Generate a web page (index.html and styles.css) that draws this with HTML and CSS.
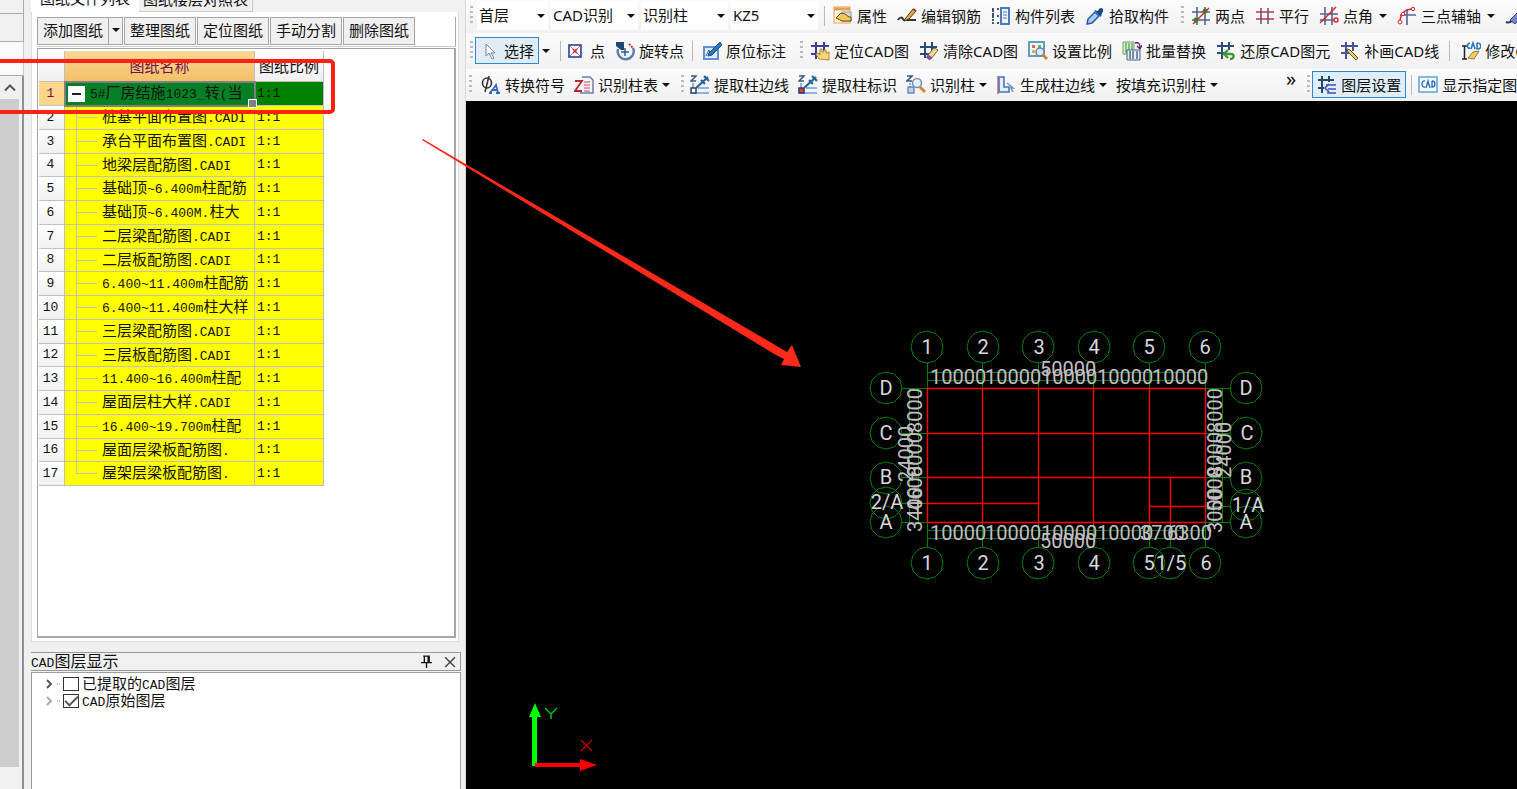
FILE: index.html
```html
<!DOCTYPE html>
<html lang="zh-CN">
<head>
<meta charset="utf-8">
<title>CAD图层显示</title>
<link rel="stylesheet" href="styles.css">
</head>
<body>
<svg class="defs" aria-hidden="true">
  <symbol id="i-prop" viewBox="0 0 20 20"><rect x="1" y="1" width="16" height="16" fill="#fff6e4" stroke="#e9a04c"/><path d="M1 3h16" stroke="#e9a04c" stroke-width="3"/><rect x="9" y="6" width="9" height="9" fill="#d8d8d8" stroke="#999"/><path d="M3 12l5-5 4 1 4 3 2 0v4H9z" fill="#f3c955" stroke="#5c4a1c"/></symbol>
  <symbol id="i-rebar" viewBox="0 0 20 20"><path d="M1 14c2-3 4-3 5-1s2 1 3 1h10" fill="none" stroke="#333" stroke-width="2"/><path d="M8 13l8-10 3 2-7 8-5 2z" fill="#d8b23c" stroke="#4c3a20"/><path d="M16 3l3 2" stroke="#b03030" stroke-width="2"/></symbol>
  <symbol id="i-list" viewBox="0 0 20 20"><path d="M1 3h3M1 10h3M1 17h3M6 3h2M6 10h2M6 17h2M2 4v14" stroke="#45526a" stroke-width="2" stroke-dasharray="2 1"/><rect x="10" y="2" width="8" height="16" fill="#eaf3ff" stroke="#4d79bd" stroke-width="2"/><path d="M12 6h4M12 9h4M12 12h4" stroke="#4d79bd"/></symbol>
  <symbol id="i-pick" viewBox="0 0 20 20"><path d="M2 18l1-5 7-7 4 4-7 7z" fill="#a9cdf2" stroke="#2b5ca8" stroke-width="1.5"/><path d="M9 4l7 7 1-4c3-3 0-7-3-4l-1 2z" fill="#174a8c"/></symbol>
  <symbol id="i-two" viewBox="0 0 20 20"><path d="M6 1v18M14 1v18M1 6h18M1 14h18" stroke="#53629c" stroke-width="1.6"/><path d="M2 18L18 2" stroke="#d22" stroke-width="1.5"/><circle cx="14" cy="5" r="2.5" fill="#4a7a1e"/><circle cx="5" cy="14" r="2.5" fill="#4a7a1e"/></symbol>
  <symbol id="i-par" viewBox="0 0 20 20"><path d="M6 2v16M13 2v16" stroke="#53629c" stroke-width="1.6"/><path d="M1 6h18M1 13h18" stroke="#c8343c" stroke-width="1.6"/></symbol>
  <symbol id="i-ang" viewBox="0 0 20 20"><path d="M6 1v18M13 1v18M1 8h18M1 14h14" stroke="#53629c" stroke-width="1.6"/><path d="M1 17L17 1" stroke="#d22" stroke-width="1.5"/><circle cx="17" cy="14" r="2" fill="#fff" stroke="#d22" stroke-width="1.5"/></symbol>
  <symbol id="i-arc" viewBox="0 0 20 20"><path d="M10 3v16M3 9h16" stroke="#53629c" stroke-width="1.6"/><path d="M3 16C3 8 8 3 16 3" fill="none" stroke="#d22" stroke-width="1.5"/><circle cx="3" cy="16" r="2" fill="#fff" stroke="#d22"/><circle cx="6" cy="8" r="1.7" fill="#fff" stroke="#d22"/><circle cx="16" cy="3" r="1.7" fill="#fff" stroke="#d22"/></symbol>
  <symbol id="i-erase" viewBox="0 0 20 20"><path d="M1 16c4 2 6-1 8-3" stroke="#345" fill="none" stroke-width="2"/><path d="M5 14l9-9 5 4-9 9z" fill="#7089c8" stroke="#49377b"/></symbol>
  <symbol id="i-cursor" viewBox="0 0 20 20"><path d="M6 3v12l3-3 3 6 2-1-3-5h4z" fill="#fff" stroke="#7185a0"/></symbol>
  <symbol id="i-point" viewBox="0 0 20 20"><rect x="3" y="4" width="12" height="12" fill="#fff" stroke="#31408c" stroke-width="1.6"/><path d="M4 5l10 10M14 5L4 15" stroke="#7f86c2"/><path d="M7 8l4 4M11 8l-4 4" stroke="#d22" stroke-width="1.6"/></symbol>
  <symbol id="i-rot" viewBox="0 0 20 20"><path d="M3 8a8 8 0 1 0 15-1" fill="none" stroke="#5a7fa8" stroke-width="2.4"/><path d="M1 1h8v8H6L1 5z" fill="#1e4672"/><path d="M10 7v8M6 11h8" stroke="#345a86" stroke-width="1.5"/><path d="M14 3l4 4" stroke="#c33" stroke-width="2" stroke-dasharray="2 1"/></symbol>
  <symbol id="i-note" viewBox="0 0 20 20"><rect x="2" y="6" width="14" height="12" fill="#dcebfb" stroke="#6390cc" stroke-width="2"/><path d="M4 15l3-6 2 5 4-4" fill="none" stroke="#305c9c"/><path d="M7 12L18 1l2 3L10 14l-4 1z" fill="#2f74be" stroke="#1e4d88"/></symbol>
  <symbol id="i-loc" viewBox="0 0 20 20"><path d="M6 1v17M14 1v9M1 5h18M1 13h9" stroke="#3a3c9c" stroke-width="2"/><path d="M9 18l-3-5 2-1 2 2V8h2v3h2V9h2v3h2v-1h1v8z" fill="#f3d77a" stroke="#b58c2c"/></symbol>
  <symbol id="i-clear" viewBox="0 0 20 20"><path d="M6 1v16M13 1v10M1 6h17M1 13h10" stroke="#294c78" stroke-width="2"/><path d="M8 15l7-8 4 2-7 9z" fill="#f0d88c" stroke="#77643c"/><path d="M8 15l4 3" stroke="#8b4ba2" stroke-width="4"/></symbol>
  <symbol id="i-scale" viewBox="0 0 20 20"><rect x="1" y="1" width="15" height="14" fill="#eef8fb" stroke="#5ba3bd" stroke-width="2"/><path d="M4 4h3v3H4z" fill="#e26c45"/><path d="M10 4h3v3h-3z" fill="#6fb451"/><path d="M4 9h3v3H4z" fill="#e8b43a"/><circle cx="12" cy="11" r="4" fill="#d9ecfb" stroke="#71819a" stroke-width="1.5"/><path d="M15 14l4 4" stroke="#c98332" stroke-width="3"/></symbol>
  <symbol id="i-batch" viewBox="0 0 20 20"><path d="M1 1h11v12H1z" fill="#d6efd3" stroke="#69a860"/><path d="M4 2v10M7 2v10M10 2v10" stroke="#69a860" stroke-width="1.4"/><path d="M5 9h13v10H5z" fill="#e6effb" stroke="#45607e"/><path d="M8 10v8M11 10v8M15 10v8" stroke="#45607e" stroke-width="1.4"/><path d="M13 2c4-1 5 1 5 5M15 5l3 3 2-4" fill="none" stroke="#526" stroke-width="1.3"/></symbol>
  <symbol id="i-restore" viewBox="0 0 20 20"><path d="M6 1v17M13 1v8M1 5h17M1 12h8" stroke="#294c78" stroke-width="2"/><path d="M9 13h6c4 0 3 5-1 5M12 9l-4 4 4 4" fill="none" stroke="#3c9a35" stroke-width="2.4"/></symbol>
  <symbol id="i-draw" viewBox="0 0 20 20"><path d="M6 1v17M13 1v9M1 5h17M1 12h8" stroke="#4654a0" stroke-width="2"/><path d="M7 8l3 1 8 8-2 2-8-8z" fill="#ecc96a" stroke="#6c5425"/></symbol>
  <symbol id="i-modify" viewBox="0 0 20 20"><path d="M1 5h5M1 18h5M3.500 5v13" stroke="#222" stroke-width="1.5"/><path d="M9 2c-4 1-3 6 0 5M10 8l2-6 2 6M16 2v6c5 0 5-6 0-6" fill="none" stroke="#2c78ba" stroke-width="1.6"/><path d="M7 17l5-6 6-1-5 8z" fill="#f0cb70" stroke="#9b782b"/></symbol>
  <symbol id="i-sym" viewBox="0 0 20 20"><ellipse cx="6" cy="8" rx="4.500" ry="5" fill="none" stroke="#333" stroke-width="1.6"/><path d="M8 1L4 17" stroke="#333" stroke-width="1.6"/><path d="M9 18l6-8 2 8M11 15h6M8 18h3M15 18h4" fill="none" stroke="#356bb5" stroke-width="1.8"/></symbol>
  <symbol id="i-ztab" viewBox="0 0 20 20"><path d="M8 2h8l3 3v13H6" fill="#f1f5ff" stroke="#6e7fa8" stroke-width="1.5"/><path d="M10 7h6M10 10h6M10 13h6M10 16h6" stroke="#c84545"/><path d="M1 6h7l-7 10h7" fill="none" stroke="#b82733" stroke-width="1.8"/></symbol>
  <symbol id="i-edge" viewBox="0 0 20 20"><path d="M1 1h5L1 6h5" fill="none" stroke="#38558a" stroke-width="1.5"/><path d="M3 8v10h16M8 13h11" fill="none" stroke="#8fb2e2" stroke-width="2"/><rect x="1" y="13" width="5" height="5" fill="#fff" stroke="#2c3e68" stroke-width="1.5"/><path d="M6 13L18 2M14 1l5 5M11 5l4 4" stroke="#28639a" stroke-width="2.2"/></symbol>
  <symbol id="i-mark" viewBox="0 0 20 20"><path d="M1 1h5L1 6h5" fill="none" stroke="#38558a" stroke-width="1.5"/><path d="M3 8v10h16M8 13h11" fill="none" stroke="#8fb2e2" stroke-width="2"/><rect x="1" y="13" width="5" height="5" fill="#e04040" stroke="#2c3e68" stroke-width="1.5"/><path d="M6 13L18 2M14 1l5 5M11 5l4 4" stroke="#28639a" stroke-width="2.2"/></symbol>
  <symbol id="i-ident" viewBox="0 0 20 20"><path d="M1 1h5L1 6h5" fill="none" stroke="#38558a" stroke-width="1.6"/><path d="M4 8v6" stroke="#38558a" stroke-dasharray="2 1"/><rect x="2" y="12" width="6" height="6" fill="#bdd5f2" stroke="#3b5f96"/><circle cx="11" cy="8" r="4.500" fill="#e3effb" stroke="#8191ab" stroke-width="1.6"/><path d="M14 12l5 5" stroke="#d28a3a" stroke-width="3"/></symbol>
  <symbol id="i-gen" viewBox="0 0 20 20"><path d="M2 1v18" stroke="#b22" /><path d="M3 2h5v10h5v5H3z" fill="#e3eefb" stroke="#4c74b5" stroke-width="1.6"/><path d="M11 8l6 5-2 0 2 4" fill="none" stroke="#7d93b0" stroke-width="1.6"/></symbol>
  <symbol id="i-layer" viewBox="0 0 20 20"><path d="M5 1v17M12 1v6M1 5h16M1 13h6" stroke="#214a6c" stroke-width="2"/><path d="M9 10h10M11 14h8M10 18h9M12 9l-4 4 4 4" fill="none" stroke="#4153b0" stroke-width="1.6"/></symbol>
  <symbol id="i-cad" viewBox="0 0 20 20"><rect x="1" y="2" width="18" height="15" fill="#f4faff" stroke="#62a8dc" stroke-width="1.6"/><path d="M7 6c-4-1-4 7 0 6M8 13l2-7 2 7M14 6v6c4 0 4-6 0-6" fill="none" stroke="#2c6fae" stroke-width="1.4"/></symbol>
</svg>

<aside class="rail">
  <div class="rail-box rail-first"></div>
  <div class="rail-box"></div>
  <div class="rail-gap"></div>
  <div class="rail-scroll">
    <svg class="up" viewBox="0 0 20 22"><path d="M5 14l5-5 5 5" fill="none" stroke="#555" stroke-width="2"/></svg>
    <div class="thumb"></div>
  </div>
</aside>

<section class="side">
  <nav class="tabs">
    <button class="tab on">图纸文件列表</button>
    <button class="tab">图纸楼层对照表</button>
  </nav>
  <div class="page">
    <div class="actions">
      <button class="act">添加图纸</button><button class="act drop" aria-label="更多"><span class="caret"></span></button>
      <button class="act">整理图纸</button>
      <button class="act">定位图纸</button>
      <button class="act">手动分割</button>
      <button class="act">删除图纸</button>
    </div>
    <div class="sheet">
      <table class="grid">
        <thead><tr><th class="no"></th><th class="name">图纸名称</th><th class="ratio">图纸比例</th></tr></thead>
        <tbody>
          <tr class="sel"><td class="no">1</td><td class="name"><button class="fold" aria-label="折叠"></button><span class="l">5#</span>厂房结施<span class="l">1023_</span>转<span class="l">(</span>当</td><td>1:1</td></tr>
          <tr><td class="no">2</td><td class="name">桩基平面布置图<span class="l">.CADI</span></td><td>1:1</td></tr>
          <tr><td class="no">3</td><td class="name">承台平面布置图<span class="l">.CADI</span></td><td>1:1</td></tr>
          <tr><td class="no">4</td><td class="name">地梁层配筋图<span class="l">.CADI</span></td><td>1:1</td></tr>
          <tr><td class="no">5</td><td class="name">基础顶<span class="l">~6.400m</span>柱配筋</td><td>1:1</td></tr>
          <tr><td class="no">6</td><td class="name">基础顶<span class="l">~6.400M.</span>柱大</td><td>1:1</td></tr>
          <tr><td class="no">7</td><td class="name">二层梁配筋图<span class="l">.CADI</span></td><td>1:1</td></tr>
          <tr><td class="no">8</td><td class="name">二层板配筋图<span class="l">.CADI</span></td><td>1:1</td></tr>
          <tr><td class="no">9</td><td class="name"><span class="l">6.400~11.400m</span>柱配筋</td><td>1:1</td></tr>
          <tr><td class="no">10</td><td class="name"><span class="l">6.400~11.400m</span>柱大样</td><td>1:1</td></tr>
          <tr><td class="no">11</td><td class="name">三层梁配筋图<span class="l">.CADI</span></td><td>1:1</td></tr>
          <tr><td class="no">12</td><td class="name">三层板配筋图<span class="l">.CADI</span></td><td>1:1</td></tr>
          <tr><td class="no">13</td><td class="name"><span class="l">11.400~16.400m</span>柱配</td><td>1:1</td></tr>
          <tr><td class="no">14</td><td class="name">屋面层柱大样<span class="l">.CADI</span></td><td>1:1</td></tr>
          <tr><td class="no">15</td><td class="name"><span class="l">16.400~19.700m</span>柱配</td><td>1:1</td></tr>
          <tr><td class="no">16</td><td class="name">屋面层梁板配筋图<span class="l">.</span></td><td>1:1</td></tr>
          <tr><td class="no">17</td><td class="name">屋架层梁板配筋图<span class="l">.</span></td><td>1:1</td></tr>
        </tbody>
      </table>
    </div>
  </div>
  <header class="dock-title">
    <h2><span class="l">CAD</span>图层显示</h2>
    <button class="mini" aria-label="固定"><svg viewBox="0 0 12 12"><path d="M3 1h6M4 1v6M7.500 1v6M8.500 1v6M1 7h10M6 7v5" fill="none" stroke="#111" stroke-width="1.2"/></svg></button>
    <button class="mini" aria-label="关闭"><svg viewBox="0 0 12 12"><path d="M2 2l9 9M11 2l-9 9" stroke="#444" stroke-width="1.3"/></svg></button>
  </header>
  <div class="dock-body">
    <div class="node"><svg class="chev" viewBox="0 0 16 12"><path d="M2 2l4 4-4 4" fill="none" stroke="#555" stroke-width="2"/><path d="M12 6h4" stroke="#888" stroke-dasharray="1 1"/></svg><input type="checkbox" id="c1"><label for="c1">已提取的<span class="l">CAD</span>图层</label></div>
    <div class="node"><svg class="chev" viewBox="0 0 16 12"><path d="M2 2l4 4-4 4" fill="none" stroke="#aaa" stroke-width="2"/><path d="M12 6h4" stroke="#888" stroke-dasharray="1 1"/></svg><input type="checkbox" id="c2" checked><label for="c2"><span class="l">CAD</span>原始图层</label></div>
  </div>
</section>

<main class="main">
  <div class="bars">
    <div class="bar top">
      <span class="grip"></span>
      <span class="combo short"><select aria-label="楼层"><option>首层</option></select></span>
      <span class="combo"><select aria-label="模块"><option>CAD识别</option></select></span>
      <span class="combo"><select aria-label="类型"><option>识别柱</option></select></span>
      <span class="combo"><select aria-label="构件"><option>KZ5</option></select></span>
      <span class="sep"></span>
      <button class="tool"><svg><use href="#i-prop"/></svg>属性</button>
      <button class="tool"><svg><use href="#i-rebar"/></svg>编辑钢筋</button>
      <button class="tool"><svg><use href="#i-list"/></svg>构件列表</button>
      <button class="tool"><svg><use href="#i-pick"/></svg>拾取构件</button>
      <span class="grip next"></span>
      <button class="tool"><svg><use href="#i-two"/></svg>两点</button>
      <button class="tool"><svg><use href="#i-par"/></svg>平行</button>
      <button class="tool"><svg><use href="#i-ang"/></svg>点角<span class="caret"></span></button>
      <button class="tool"><svg><use href="#i-arc"/></svg>三点辅轴<span class="caret"></span></button>
      <button class="tool" aria-label="删除辅轴"><svg><use href="#i-erase"/></svg></button>
    </div>
    <div class="bar mid">
      <span class="grip"></span>
      <button class="tool active"><svg><use href="#i-cursor"/></svg>选择</button>
      <button class="tool more" aria-label="选择方式"><span class="caret"></span></button>
      <span class="sep"></span>
      <button class="tool point"><svg><use href="#i-point"/></svg>点</button>
      <button class="tool"><svg><use href="#i-rot"/></svg>旋转点</button>
      <span class="sep"></span>
      <button class="tool"><svg><use href="#i-note"/></svg>原位标注</button>
      <span class="grip next wide"></span>
      <button class="tool"><svg><use href="#i-loc"/></svg>定位CAD图</button>
      <button class="tool"><svg><use href="#i-clear"/></svg>清除CAD图</button>
      <button class="tool"><svg><use href="#i-scale"/></svg>设置比例</button>
      <button class="tool"><svg><use href="#i-batch"/></svg>批量替换</button>
      <button class="tool"><svg><use href="#i-restore"/></svg>还原CAD图元</button>
      <button class="tool"><svg><use href="#i-draw"/></svg>补画CAD线</button>
      <span class="sep end"></span>
      <button class="tool"><svg><use href="#i-modify"/></svg>修改CAD</button>
    </div>
    <div class="bar low">
      <span class="grip"></span>
      <button class="tool"><svg><use href="#i-sym"/></svg>转换符号</button>
      <button class="tool"><svg><use href="#i-ztab"/></svg>识别柱表<span class="caret"></span></button>
      <span class="grip next"></span>
      <button class="tool"><svg><use href="#i-edge"/></svg>提取柱边线</button>
      <button class="tool"><svg><use href="#i-mark"/></svg>提取柱标识</button>
      <button class="tool"><svg><use href="#i-ident"/></svg>识别柱<span class="caret"></span></button>
      <button class="tool"><svg><use href="#i-gen"/></svg>生成柱边线<span class="caret"></span></button>
      <button class="tool">按填充识别柱<span class="caret"></span></button>
      <button class="tool overflow">»</button>
      <span class="grip next"></span>
      <button class="tool active layer"><svg><use href="#i-layer"/></svg>图层设置</button>
      <span class="sep"></span>
      <button class="tool"><svg><use href="#i-cad"/></svg>显示指定图层</button>
    </div>
  </div>
  <div class="canvas">
    <svg class="drawing" viewBox="466 101 1051 688">
      <defs><polygon id="bub" points="0,-16 8,-14 14,-8 16,0 14,8 8,14 0,16 -8,14 -14,8 -16,0 -14,-8 -8,-14"/></defs>
      <g class="green">
        <path d="M927.500 363v25M982.500 363v25M1038.500 363v25M1093.500 363v25M1149.500 363v25M1205.500 363v25M927.500 522v25M982.500 522v25M1038.500 522v25M1093.500 522v25M1149.500 522v25M1170.500 522v25M1205.500 522v25"/>
        <path d="M902 388.500h25M902 433.500h25M902 477.500h25M902 503.500h25M902 522.500h25M1205 388.500h25M1205 433.500h25M1205 477.500h25M1205 506.500h25M1205 522.500h25"/>
        <path d="M927 372.500h278M927 380.500h278M927 530.500h278M927 538.500h278M909.500 388v134M918.500 388v134M1213.500 388v134M1222.500 388v134"/>
        <use href="#bub" x="927" y="347"/><use href="#bub" x="983" y="347"/><use href="#bub" x="1038" y="347"/><use href="#bub" x="1094" y="347"/><use href="#bub" x="1149" y="347"/><use href="#bub" x="1205" y="347"/>
        <use href="#bub" x="927" y="563"/><use href="#bub" x="983" y="563"/><use href="#bub" x="1038" y="563"/><use href="#bub" x="1094" y="563"/><use href="#bub" x="1149" y="563"/><use href="#bub" x="1170" y="563"/><use href="#bub" x="1205" y="563"/>
        <use href="#bub" x="886" y="388"/><use href="#bub" x="886" y="433"/><use href="#bub" x="886" y="478"/><use href="#bub" x="886" y="503"/><use href="#bub" x="886" y="522"/>
        <use href="#bub" x="1246" y="388"/><use href="#bub" x="1246" y="433"/><use href="#bub" x="1246" y="478"/><use href="#bub" x="1246" y="505"/><use href="#bub" x="1246" y="522"/>
      </g>
      <path class="red" d="M927.500 388v134M982.500 388v134M1038.500 388v134M1093.500 388v134M1149.500 388v134M1205.500 388v134M1170.500 477v45M927 388.500h278M927 433.500h278M927 477.500h278M927 522.500h278M927 503.500h111M1149 506.500h56"/>
      <g class="dim">
        <text x="930" y="384">10000</text><text x="985" y="384">10000</text><text x="1041" y="384">10000</text><text x="1097" y="384">10000</text><text x="1152" y="384">10000</text><text x="1040" y="376">50000</text>
        <text x="930" y="540">10000</text><text x="985" y="540">10000</text><text x="1041" y="540">10000</text><text x="1097" y="540">10000</text><text x="1140" y="540">3700</text><text x="1167" y="540">6300</text><text x="1040" y="548">50000</text>
        <text transform="translate(922 433) rotate(-90)">8000</text><text transform="translate(922 477) rotate(-90)">8000</text><text transform="translate(922 511) rotate(-90)">4600</text><text transform="translate(922 532) rotate(-90)">3400</text><text transform="translate(913 482) rotate(-90)">24000</text>
        <text transform="translate(1222 433) rotate(-90)">8000</text><text transform="translate(1222 477) rotate(-90)">8000</text><text transform="translate(1222 512) rotate(-90)">5000</text><text transform="translate(1222 533) rotate(-90)">3000</text><text transform="translate(1231 478) rotate(-90)">24000</text>
      </g>
      <g class="axis">
        <text x="927" y="354">1</text><text x="983" y="354">2</text><text x="1039" y="354">3</text><text x="1094" y="354">4</text><text x="1149" y="354">5</text><text x="1205" y="354">6</text>
        <text x="927" y="570">1</text><text x="983" y="570">2</text><text x="1039" y="570">3</text><text x="1094" y="570">4</text><text x="1149" y="570">5</text><text x="1171" y="570">1/5</text><text x="1206" y="570">6</text>
        <text x="886" y="395">D</text><text x="886" y="440">C</text><text x="886" y="484">B</text><text x="887" y="509">2/A</text><text x="886" y="529">A</text>
        <text x="1246" y="395">D</text><text x="1247" y="440">C</text><text x="1246" y="484">B</text><text x="1248" y="512">1/A</text><text x="1246" y="529">A</text>
      </g>
      <path d="M532 766v-49h-3l6-14 6 14h-4v49z" fill="#0f0"/>
      <path d="M535 763h45v-4l17 6-17 6v-4h-45z" fill="#f00"/>
      <path d="M545 708l6 6 6-6M551 714v5" fill="none" stroke="#00c800" stroke-width="1.4"/>
      <path d="M581 740l11 11M592 740l-11 11" fill="none" stroke="#c00000" stroke-width="1.4"/>
    </svg>
  </div>
</main>

<div class="mark-box"></div>
<svg class="mark-arrow" viewBox="0 0 400 240"><path d="M2 9l1-1L367 221l5-7 9 22-20-2 3-6L356 224z" fill="#ff2a1a"/></svg>
</body>
</html>
```
FILE: styles.css
```css
* { box-sizing: border-box; }
body {
  margin: 0;
  height: 100vh;
  display: flex;
  position: relative;
  overflow: hidden;
  background: #f0f0f0;
  color: #111;
  font: 15px/20px "Noto Sans", "Noto Sans CJK SC", sans-serif;
}
button, select { font: inherit; color: inherit; border: 0; background: none; padding: 0; margin: 0; }
.defs { position: absolute; width: 0; height: 0; }
.caret { display: inline-block; border: 4px solid transparent; border-top-color: #111; border-bottom: 0; }
.l { font-family: "Liberation Mono", monospace; font-size: 13px; }

/* left rail */
.rail { flex: none; width: 24px; display: flex; flex-direction: column; }
.rail-box { height: 28px; border: solid #aaa; border-width: 0 1px 1px 0; }
.rail-first { height: 14px; }
.rail-gap { height: 34px; background: #fafafa; border-right: 1px solid #ccc; border-bottom: 1px solid #aaa; }
.rail-scroll { flex: 1; display: flex; flex-direction: column; padding: 0 2px 22px 0; border-right: 2px solid #8a8f98; }
.up { height: 23px; width: 20px; }
.thumb { flex: 1; width: 19px; background: #cdcdcd; }

/* drawing list */
.side { flex: none; width: 442px; display: flex; flex-direction: column; padding: 0 4px 0 7px; border-right: 1px solid #d8d8d8; }
.tabs { display: flex; height: 12px; overflow: hidden; align-items: flex-end; }
.tab { height: 24px; padding: 0 4px 1px; line-height: 18px; white-space: nowrap; }
.tab.on { background: #fff; padding: 0 9px 4px; }
.tab:last-child { border-right: 1px solid #ccc; border-bottom: 1px solid #ccc; }
.page { height: 630px; margin-right: 2px; padding: 5px 2px 3px 5px; background: #fff; border: solid #dcdcdc; border-width: 0 1px 1px; display: flex; flex-direction: column; }
.actions { display: flex; gap: 1px; padding-bottom: 1px; border-bottom: 1px solid #ccc; border-right: 1px solid #aaa; margin-bottom: 1px; }
.act { width: 72px; height: 28px; padding-bottom: 2px; border: 1px solid #a5a5a5; background: #f0f0f0; }
.act.drop { width: 15px; margin-left: -2px; display: grid; place-items: center; }
.sheet { flex: 1; border: solid #a4a6ad; border-width: 1px 2px 2px 1px; padding: 2px 0 0 1px; }
.grid { width: 285px; table-layout: fixed; border-collapse: separate; border-spacing: 0; font-size: 15px; line-height: 20px; }
.grid th { height: 31px; padding: 0 0 1px; font-weight: 400; background: linear-gradient(#fff, #efefef); border: solid #c0c0c0; border-width: 0 1px 1px 0; }
.grid th.name { background: linear-gradient(#f9d795, #f3c067); color: #70104c; }
.grid th.no { width: 26px; }
.grid th.ratio { width: 69px; }
.grid td { height: 24px; padding: 0 0 0 2px; background: #ff0; border: solid #c0c0c0; border-width: 0 1px 1px 0; white-space: nowrap; font-family: "Liberation Mono", monospace; font-size: 13px; }
.grid tr:nth-child(4n) td { height: 23px; }
.grid tr { line-height: 16px; }
.grid td.no { padding: 0 2px 0 0; text-align: center; background: linear-gradient(#fff, #f0f0f0); }
.grid td.name {
  padding-left: 37px;
  font-family: "Noto Sans CJK SC", sans-serif;
  font-size: 15px;
  background:
    linear-gradient(#c0c0c0, #c0c0c0) 11px 0 / 1px 100% no-repeat,
    linear-gradient(#c0c0c0, #c0c0c0) 11px 50% / 21px 1px no-repeat, #ff0;
}
.grid tr:last-child td.name { background-size: 1px 50%, 21px 1px; }
.grid .sel td { background: #008000; }
.grid .sel td.no { background: #ffd58c; color: #70104c; }
.grid .sel td.name { position: relative; padding-left: 3px; background: #068024; outline: 2px solid #808080; outline-offset: -1px; }
.grid .sel td.name::after { content: ""; position: absolute; right: -3px; bottom: -3px; width: 7px; height: 7px; background: #808080; border: 1px solid #fff; }
.fold { width: 17px; height: 16px; margin-right: 5px; vertical-align: middle; background: linear-gradient(#222, #222) center / 9px 2px no-repeat #fff; }

/* layer dock */
.dock-title { display: flex; align-items: center; gap: 10px; height: 19px; margin-top: 10px; padding-right: 4px; border: 1px solid #999; border-left: 0; }
.dock-title h2 { flex: 1; margin: 0; font: 16px/17px "Noto Sans CJK SC", sans-serif; }
.mini { width: 13px; height: 13px; display: flex; }
.mini svg { width: 13px; height: 13px; }
.dock-body { flex: 1; margin-top: 1px; padding: 2px 0 0 13px; background: #fff; border: 1px solid #9a9da6; border-bottom: 0; }
.node { display: flex; align-items: center; height: 17px; font: 15px/17px "Noto Sans CJK SC", sans-serif; }
.chev { width: 16px; height: 12px; margin-right: 2px; }
.node input { appearance: none; width: 16px; height: 14px; margin: 0 3px 0 0; border: 1px solid #333; background: #fff; display: grid; place-items: center; }
.node input:checked::after { content: ""; width: 11px; height: 5px; margin-top: -3px; border: solid #555; border-width: 0 0 2px 2px; transform: rotate(-45deg); }

/* toolbars */
.main { flex: 1; min-width: 0; display: flex; flex-direction: column; }
.bars { overflow: hidden; background: #f8f8f8; }
.bar { display: flex; align-items: center; height: 33px; gap: 10px; padding-left: 4px; white-space: nowrap; background: linear-gradient(#fbfbfb, #f1f1f1); }
.bar.top { padding-bottom: 2px; }
.bar.mid { height: 36px; padding-bottom: 1px; }
.bar.low { height: 32px; gap: 9px; padding: 0 0 1px 3px; }
.bar > * { flex: none; }
.grip { width: 3px; height: 20px; background: repeating-linear-gradient(#bbb 0 2px, transparent 2px 5px); }
.grip.next { margin: 0 -3px 0 2px; }
.grip.wide { margin-left: 4px; }
.sep { width: 1px; height: 20px; background: #bbb; margin: 0 -3px 0 -4px; }
.top .sep { margin-right: -2px; }
.mid .sep { margin: 0 -1px 0 -2px; }
.mid .sep.end { margin: 0 1px 0 0; }
.combo { position: relative; width: 87px; height: 29px; background: #fff; margin-left: -7px; }
.combo.short { width: 71px; margin-left: -6px; }
.combo select { width: 100%; height: 100%; appearance: none; padding: 0 2px 2px; }
.combo::after { content: ""; position: absolute; right: 3px; top: 13px; border: 4px solid transparent; border-top-color: #111; border-bottom: 0; pointer-events: none; }
.tool { display: flex; align-items: center; height: 27px; }
.tool svg { width: 20px; height: 20px; margin-right: 4px; }
.tool .caret { margin-left: 6px; }
.low .tool .caret { margin-left: 4px; }
.tool.active { padding: 0 4px; margin-left: -8px; border: 1px solid #2a8ad6; background: #e0ecf6; }
.tool.active.layer { margin-left: -4px; }
.tool.more { margin: 0 0 0 -9px; }
.tool.more .caret { margin: 0 2px; }
.tool.point { margin-left: -4px; }
.tool.overflow { margin-left: 59px; font-size: 20px; padding-bottom: 12px; }

/* model view */
.canvas { flex: 1; min-height: 0; background: #000; }
.drawing { display: block; width: 100%; height: 100%; }
.green { fill: none; stroke: #008000; }
.red { fill: none; stroke: #f00; stroke-width: 1.4; }
.dim, .axis { font: 20px Roboto, "Liberation Sans", sans-serif; fill: #c4bec4; }
.axis { fill: #d8d8d8; text-anchor: middle; }

/* annotation */
.mark-box { position: absolute; left: -6px; top: 59px; width: 341px; height: 55px; border: 4px solid #ff2014; border-radius: 5px; }
.mark-arrow { position: absolute; left: 420px; top: 131px; width: 400px; height: 240px; }
```
